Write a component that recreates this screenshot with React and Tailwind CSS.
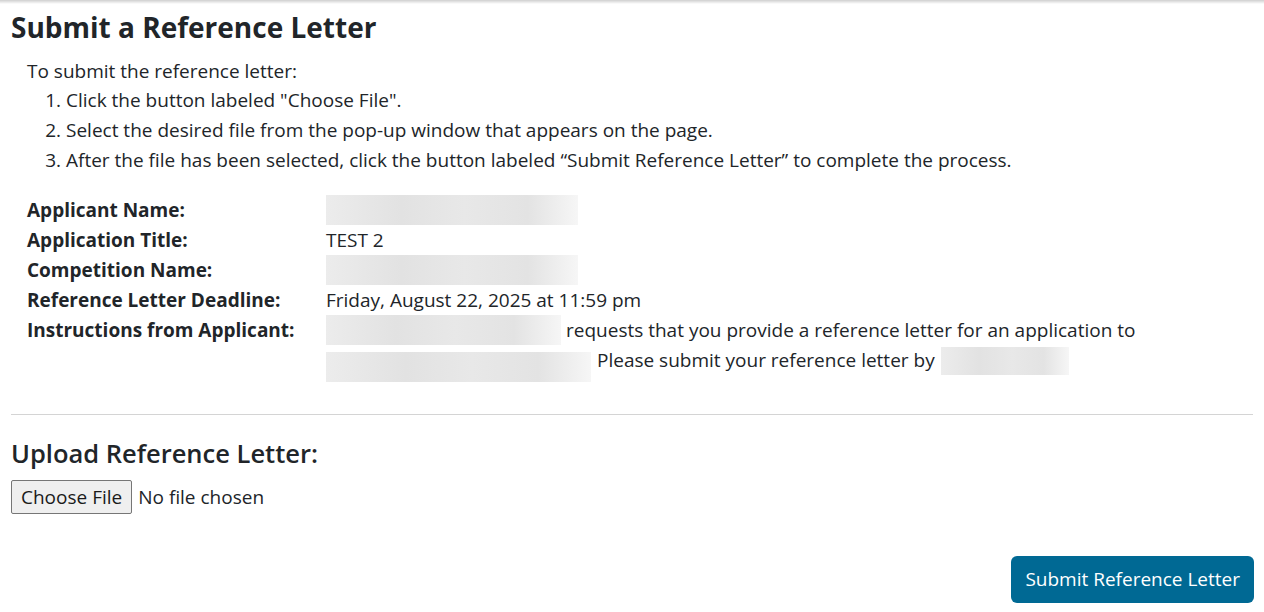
import React from "react";

const Blur = ({ w, h = 30, className = "" }) => (
  <span
    className={`inline-block shrink-0 bg-[linear-gradient(90deg,#ececec_0%,#e2e2e2_30%,#e8e8e8_55%,#e3e3e3_80%,#f6f6f6_100%)] ${className}`}
    style={{ width: w, height: h }}
  />
);

export default function App() {
  return (
    <div className="min-h-[612px] bg-white text-[#212529] font-['Open_Sans',sans-serif] text-[19px]">
      <div className="h-[4px] bg-[linear-gradient(180deg,#cfcfcf,#ffffff)]" />
      <div className="px-[11px]">
        <h1 className="text-[28px] font-bold leading-[44px] mt-[1px]">Submit a Reference Letter</h1>
        <div className="pl-[16px] mt-[8px] leading-[30px]">
          <p className="leading-[28px]">To submit the reference letter:</p>
          <ol className="list-decimal pl-[39px] leading-[30px]">
            <li>Click the button labeled "Choose File".</li>
            <li>Select the desired file from the pop-up window that appears on the page.</li>
            <li>After the file has been selected, click the button labeled “Submit Reference Letter” to complete the process.</li>
          </ol>
        </div>
        <div className="pl-[16px] mt-[20px] grid grid-cols-[299px_1fr] leading-[30px]">
          <div className="font-bold">Applicant Name:</div>
          <div className="flex h-[30px]"><Blur w={252} /></div>
          <div className="font-bold">Application Title:</div>
          <div>TEST 2</div>
          <div className="font-bold">Competition Name:</div>
          <div className="flex h-[30px]"><Blur w={252} /></div>
          <div className="font-bold">Reference Letter Deadline:</div>
          <div>Friday, August 22, 2025 at 11:59 pm</div>
          <div className="font-bold">Instructions from Applicant:</div>
          <div>
            <div className="flex items-center gap-[5px] h-[30px]"><Blur w={235} /><span className="whitespace-nowrap">requests that you provide a reference letter for an application to</span></div>
            <div className="flex items-start gap-[6px]">
              <Blur w={265} className="mt-[7px]" />
              <span className="whitespace-nowrap">Please submit your reference letter by</span>
              <Blur w={128} h={28} className="mt-[2px]" />
            </div>
          </div>
        </div>
        <hr className="mt-[32px] border-t border-[#d4d4d4]" />
        <h2 className="text-[25.5px] font-semibold mt-[20px] leading-[36px]">Upload Reference Letter:</h2>
        <div className="flex items-center mt-[9px]">
          <span className="inline-flex items-center h-[34px] px-[9px] bg-[#efefef] border border-[#767676] rounded-[2px] text-[#1a1a1a]">Choose File</span>
          <span className="ml-[6px]">No file chosen</span>
        </div>
        <div className="flex justify-end mt-[42px]">
          <button className="mr-[-1px] h-[47px] px-[14px] rounded-[6px] bg-[#006994] text-white text-[19px]">Submit Reference Letter</button>
        </div>
      </div>
    </div>
  );
}
